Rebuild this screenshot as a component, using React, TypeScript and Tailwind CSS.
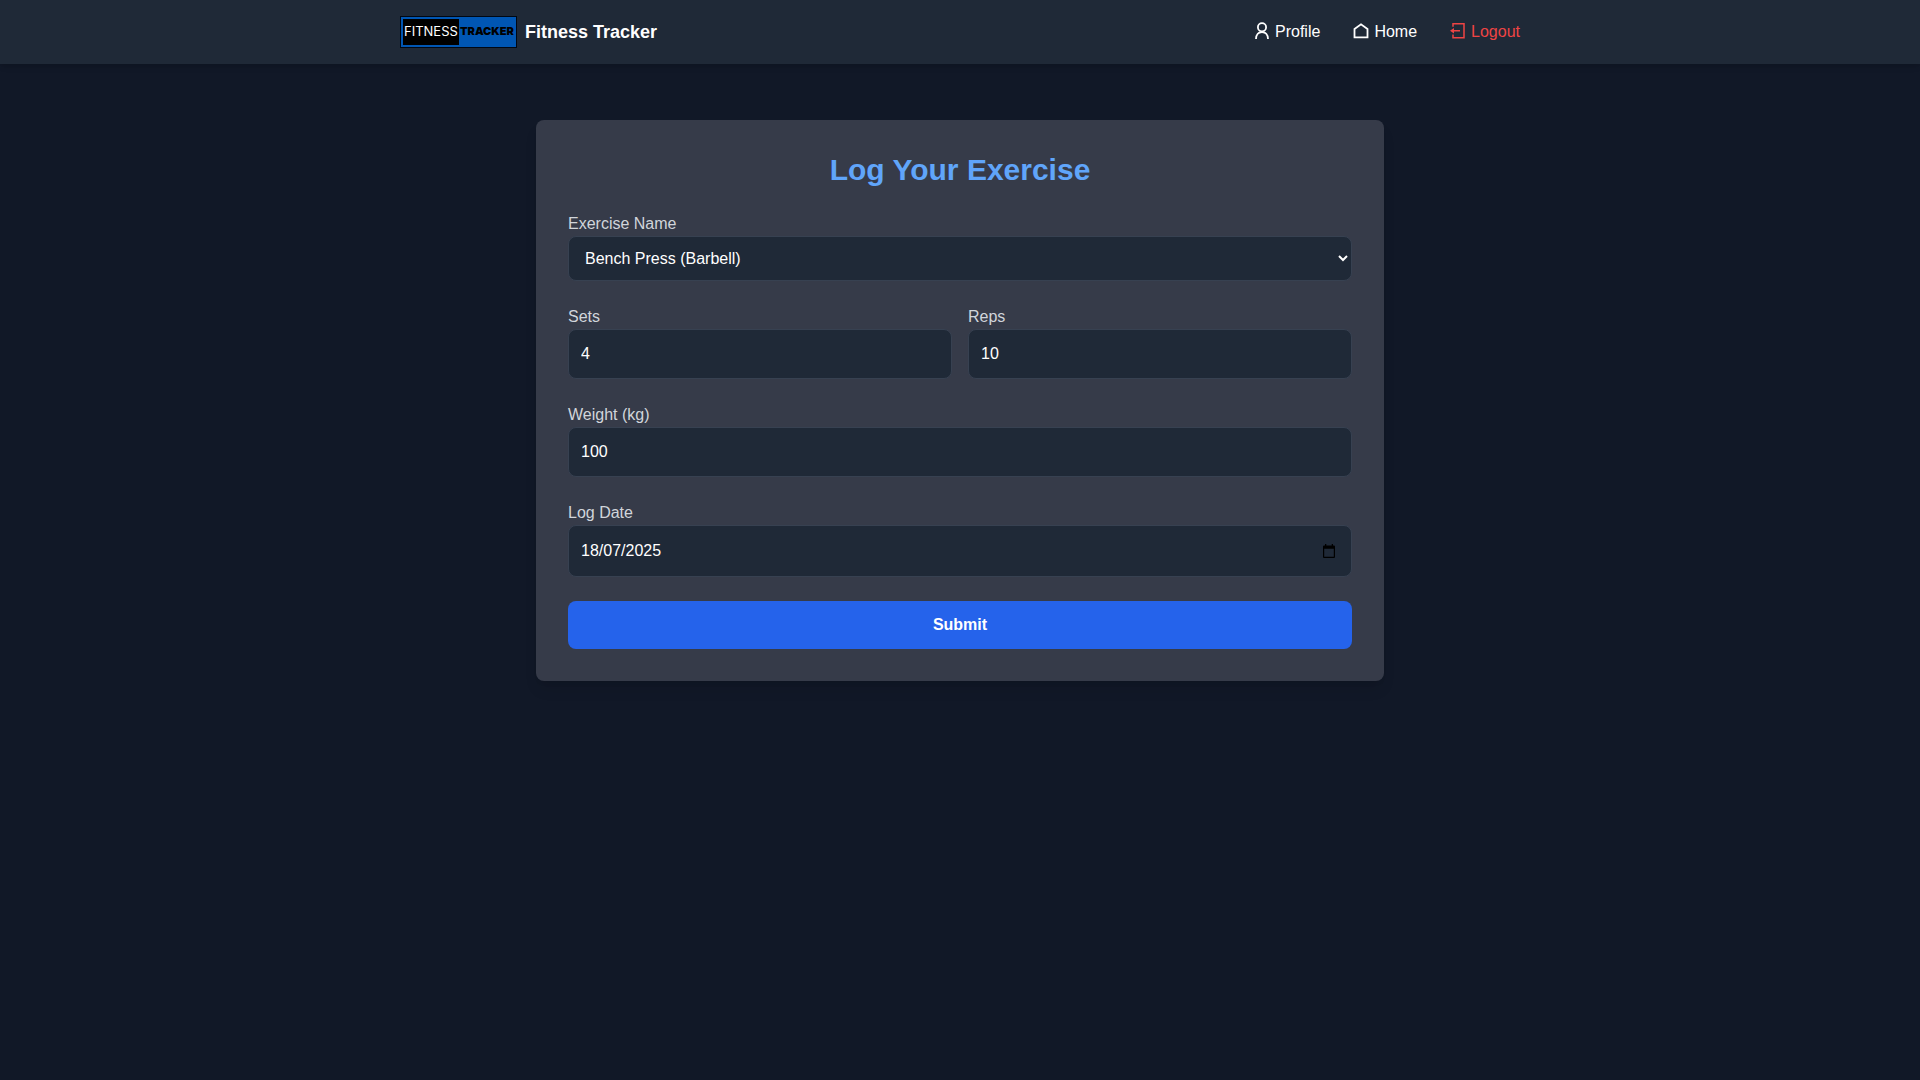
import React from "react";

const fieldClass =
  "block w-full rounded-lg border border-[#374151] bg-[#1f2937] p-3 text-base text-white outline-none";
const labelClass = "block text-base text-[#d1d5db]";

function Logo() {
  return (
    <svg viewBox="0 0 117 32" className="h-8 w-auto shrink-0" role="img" aria-label="Fitness Tracker logo">
      <rect width="117" height="32" fill="#000814" />
      <rect x="1" y="1" width="115" height="30" fill="#0056b3" />
      <rect x="3" y="3" width="56" height="26" fill="#000" />
      <text x="4" y="20" fontFamily="Inter, sans-serif" fontWeight="400" fontSize="13" fill="#fff">FITNESS</text>
      <text x="60" y="19" fontFamily="Inter, sans-serif" fontWeight="900" fontSize="11" fill="#000">TRACKER</text>
    </svg>
  );
}

function ProfileIcon() {
  return (
    <svg viewBox="0 0 18 20" className="h-5 w-[18px]" fill="none" stroke="currentColor" strokeWidth="1.8" aria-hidden="true">
      <circle cx="9" cy="5.200" r="4.100" />
      <path d="M3 17c0-4.400 2.600-7 6-7s6 2.600 6 7" />
    </svg>
  );
}

function HomeIcon() {
  return (
    <svg viewBox="0 0 18 20" className="h-5 w-[18px]" fill="none" stroke="currentColor" strokeWidth="1.800" aria-hidden="true">
      <path d="M2.500 7 9 2.300 15.500 7v8.300h-13z" />
    </svg>
  );
}

function LogoutIcon() {
  return (
    <svg viewBox="0 0 18 20" className="h-5 w-[18px]" fill="none" stroke="currentColor" strokeWidth="1.500" aria-hidden="true">
      <path d="M4 4.800V1.700h11v14H4v-3.100M11 8.700H4" />
      <path d="M5 6 1 8.700l4 2.700z" fill="currentColor" stroke="none" />
    </svg>
  );
}

function CalendarIcon() {
  return (
    <svg viewBox="0 0 14 15" className="h-[15px] w-[14px]" aria-hidden="true">
      <path d="M3 0h1.300v1.500h5.400V0H11v1.500h1a1 1 0 0 1 1 1V13a1 1 0 0 1-1 1H2a1 1 0 0 1-1-1V2.500a1 1 0 0 1 1-1h1zM2.200 4.700v8.100h9.600V4.700z" fill="#000" fillRule="evenodd" />
    </svg>
  );
}

export default function App() {
  return (
    <div className="min-h-screen bg-[#111827] font-['Liberation_Sans',Arial,sans-serif] text-white">
      <header className="bg-[#1f2937] shadow-md">
        <nav className="mx-auto flex h-16 max-w-6xl items-center justify-between px-4">
          <a href="#" className="flex items-center gap-2">
            <Logo />
            <span className="text-lg font-bold">Fitness Tracker</span>
          </a>
          <div className="flex items-center gap-8">
            <a href="#profile" className="flex items-center gap-1"><ProfileIcon />Profile</a>
            <a href="#home" className="flex items-center gap-1"><HomeIcon />Home</a>
            <button type="button" className="flex items-center gap-1 text-[#ef4444]"><LogoutIcon />Logout</button>
          </div>
        </nav>
      </header>
      <main className="mx-auto max-w-4xl px-6 pt-14 pb-8">
        <form className="space-y-6 rounded-lg bg-[#363b49] p-8 shadow-lg" onSubmit={(e) => e.preventDefault()}>
          <h1 className="text-center text-3xl font-bold text-[#60a5fa]">Log Your Exercise</h1>
          <div>
            <label htmlFor="exercise" className={labelClass}>Exercise Name</label>
            <select id="exercise" className={fieldClass}>
              <option>Bench Press (Barbell)</option>
            </select>
          </div>
          <div className="grid grid-cols-2 gap-4">
            <div>
              <label htmlFor="sets" className={labelClass}>Sets</label>
              <input id="sets" type="number" defaultValue={4} className={fieldClass} />
            </div>
            <div>
              <label htmlFor="reps" className={labelClass}>Reps</label>
              <input id="reps" type="number" defaultValue={10} className={fieldClass} />
            </div>
          </div>
          <div>
            <label htmlFor="weight" className={labelClass}>Weight (kg)</label>
            <input id="weight" type="number" defaultValue={100} className={fieldClass} />
          </div>
          <div>
            <label htmlFor="date" className={labelClass}>Log Date</label>
            <div className="flex h-[52px] items-center rounded-lg border border-[#374151] bg-[#1f2937] px-3">
              <input
                id="date"
                type="text"
                inputMode="numeric"
                defaultValue="18/07/2025"
                className="min-w-0 flex-1 bg-transparent text-base text-white outline-none"
              />
              <button type="button" aria-label="Open calendar" className="px-[3px]">
                <CalendarIcon />
              </button>
            </div>
          </div>
          <button type="submit" className="block w-full rounded-lg bg-[#2563eb] py-3 text-base font-bold">Submit</button>
        </form>
      </main>
    </div>
  );
}
